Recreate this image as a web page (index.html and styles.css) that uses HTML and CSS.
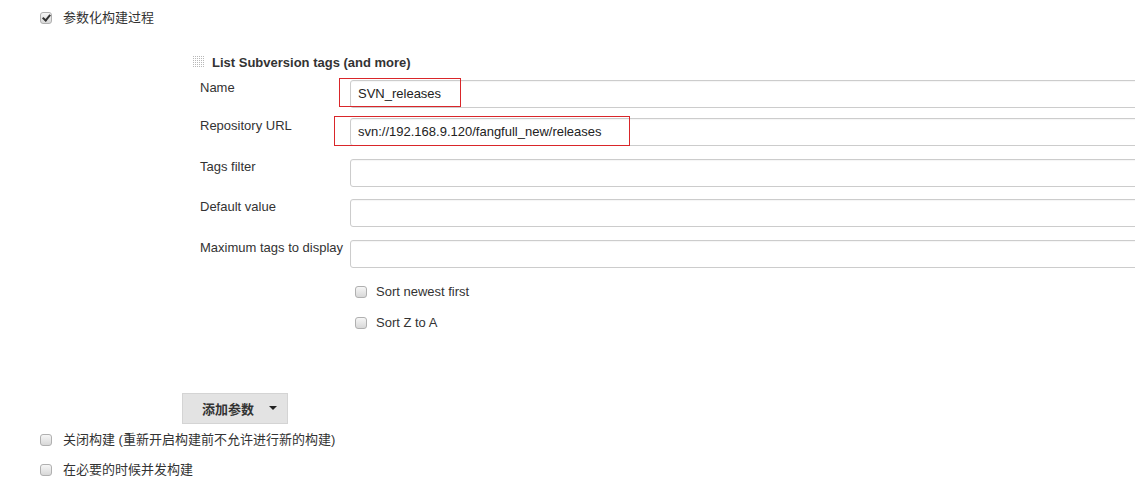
FILE: index.html
```html
<!DOCTYPE html>
<html>
<head>
<meta charset="utf-8">
<link rel="stylesheet" href="styles.css">
</head>
<body>
<div class="page">
  <div class="check-row top">
    <span class="cb checked"></span>
    <span class="cb-label">参数化构建过程</span>
  </div>

  <div class="param">
    <div class="param-head">
      <svg class="grip" width="12" height="12" viewBox="0 0 12 12">
        <defs>
          <pattern id="dots" width="2" height="2" patternUnits="userSpaceOnUse">
            <rect width="1" height="1" fill="#b8b8b8"/>
          </pattern>
        </defs>
        <rect width="12" height="12" fill="url(#dots)"/>
      </svg>
      <span class="param-title">List Subversion tags (and more)</span>
    </div>

    <div class="form">
      <div class="row first">
        <div class="label">Name</div>
        <div class="field">
          <div class="input">SVN_releases</div>
          <span class="mark mark-name"></span>
        </div>
      </div>
      <div class="row">
        <div class="label">Repository URL</div>
        <div class="field">
          <div class="input">svn://192.168.9.120/fangfull_new/releases</div>
          <span class="mark mark-url"></span>
        </div>
      </div>
      <div class="row">
        <div class="label">Tags filter</div>
        <div class="field"><div class="input"></div></div>
      </div>
      <div class="row">
        <div class="label">Default value</div>
        <div class="field"><div class="input"></div></div>
      </div>
      <div class="row">
        <div class="label">Maximum tags to display</div>
        <div class="field"><div class="input"></div></div>
      </div>

      <div class="opts">
        <div class="check-row">
          <span class="cb"></span>
          <span class="cb-label">Sort newest first</span>
        </div>
        <div class="check-row">
          <span class="cb"></span>
          <span class="cb-label">Sort Z to A</span>
        </div>
      </div>
    </div>
  </div>

  <div class="btn-wrap">
    <div class="btn"><span class="btn-text">添加参数</span><span class="caret"></span></div>
  </div>

  <div class="bottom">
    <div class="check-row">
      <span class="cb"></span>
      <span class="cb-label">关闭构建 (重新开启构建前不允许进行新的构建)</span>
    </div>
    <div class="check-row">
      <span class="cb"></span>
      <span class="cb-label">在必要的时候并发构建</span>
    </div>
  </div>
</div>
</body>
</html>
```

FILE: styles.css
```css
html, body {
  margin: 0;
  padding: 0;
  background: #fff;
  overflow: hidden;
}
body {
  font-family: "Liberation Sans", Arial, "Noto Sans CJK SC", sans-serif;
  font-size: 13px;
  color: #333;
}
.page {
  width: 1135px;
  height: 492px;
  overflow: hidden;
  position: relative;
}
.check-row {
  display: flex;
  align-items: center;
  height: 16px;
}
.cb {
  width: 12px;
  height: 12px;
  box-sizing: border-box;
  border: 1px solid #b0b0b0;
  border-radius: 3px;
  background: linear-gradient(#f6f6f6, #d8d8d8);
  position: relative;
  flex: none;
}
.cb.checked::after {
  content: "";
  position: absolute;
  left: 3px;
  top: 0px;
  width: 3px;
  height: 6px;
  border: solid #333;
  border-width: 0 2px 2px 0;
  transform: rotate(40deg);
}
.cb-label {
  margin-left: 11px;
  line-height: 16px;
}
.top {
  margin: 10px 0 0 40px;
}
.param {
  margin: 28px 0 0 193px;
}
.param-head {
  display: flex;
  align-items: center;
  height: 16px;
}
.grip {
  display: block;
  flex: none;
}
.param-title {
  margin-left: 7px;
  font-weight: bold;
  color: #333;
}
.form {
  margin: 10px 0 0 7px;
}
.row {
  display: flex;
  height: 28px;
  margin-bottom: 12.5px;
}
.row.first {
  margin-bottom: 10px;
}
.label {
  width: 150px;
  flex: none;
  line-height: 15px;
  color: #333;
}
.field {
  position: relative;
  flex: none;
}
.input {
  width: 820px;
  height: 28px;
  box-sizing: border-box;
  border: 1px solid #ccc;
  border-radius: 3px;
  padding: 0 7px;
  line-height: 26px;
  color: #222;
  box-shadow: inset 0 1px 1px rgba(0,0,0,0.04);
}
.mark {
  position: absolute;
  border: 1px solid #d9262a;
  pointer-events: none;
}
.mark-name {
  left: -11px;
  top: -2px;
  width: 120px;
  height: 27px;
}
.mark-url {
  left: -16px;
  top: -2px;
  width: 294px;
  height: 28px;
}
.opts {
  margin: 16px 0 0 155px;
  display: flex;
  flex-direction: column;
  gap: 15px;
}
.opts .cb-label {
  margin-left: 9px;
}
.btn-wrap {
  margin: 62px 0 0 182px;
}
.btn {
  width: 106px;
  height: 31px;
  box-sizing: border-box;
  border: 1px solid #d4d4d4;
  background: #e3e3e3;
  display: flex;
  align-items: center;
}
.btn-text {
  margin-left: 19px;
  font-weight: bold;
  color: #333;
}
.caret {
  margin-left: 15px;
  width: 0;
  height: 0;
  border-left: 4px solid transparent;
  border-right: 4px solid transparent;
  border-top: 4px solid #222;
}
.bottom {
  margin: 8px 0 0 40px;
  display: flex;
  flex-direction: column;
  gap: 14px;
}
```
